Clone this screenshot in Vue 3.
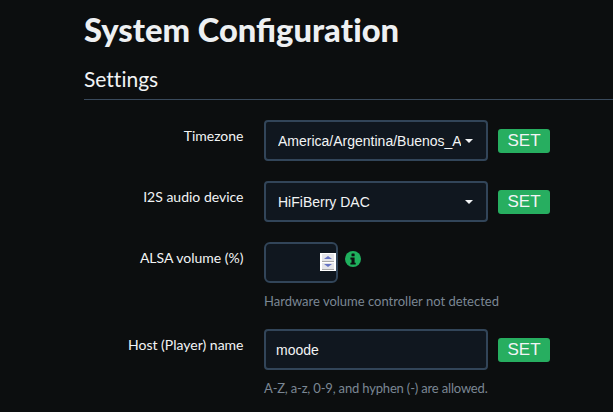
<template>
  <div class="page">
    <h1 class="title">System Configura<span class="nolig">ti</span>on</h1>
    <div class="legend">Settings</div>

    <div class="row">
      <label class="label">Timezone</label>
      <div class="controls">
        <div class="select">
          <span class="select-text">America/Argentina/Buenos_Aires</span>
          <span class="caret"></span>
        </div>
        <button class="btn">SET</button>
      </div>
    </div>

    <div class="row">
      <label class="label">I2S audio device</label>
      <div class="controls">
        <div class="select">
          <span class="select-text">HiFiBerry DAC</span>
          <span class="caret"></span>
        </div>
        <button class="btn">SET</button>
      </div>
    </div>

    <div class="row row-help">
      <label class="label">ALSA volume (%)</label>
      <div class="controls">
        <div class="number">
          <div class="spinner">
            <span class="spin"><i class="arrow up"></i></span>
            <span class="spin"><i class="arrow down"></i></span>
          </div>
        </div>
        <svg class="info" viewBox="0 0 16 16" width="16" height="16">
          <circle cx="8" cy="8" r="8" fill="#1fb05d" />
          <rect x="6.5" y="2.4" width="3.1" height="2.9" rx="0.5" fill="#0c0e0f" />
          <path d="M5.4 6.6h4.2v5.1h1.1v1.9H5.4v-1.9h1.1V8.5H5.4z" fill="#0c0e0f" />
        </svg>
      </div>
    </div>
    <div class="help">Hardware volume controller not detected</div>

    <div class="row row-help">
      <label class="label">Host (Player) name</label>
      <div class="controls">
        <div class="input">moode</div>
        <button class="btn">SET</button>
      </div>
    </div>
    <div class="help help-tight">A-Z, a-z, 0-9, and hyphen (-) are allowed.</div>
  </div>
</template>

<script setup>
</script>

<style>
html, body {
  background: #0c0e0f;
  overflow: hidden;
}
</style>

<style scoped>
.page {
  height: 412px;
  overflow: hidden;
  padding: 7px 0 0 84px;
  box-sizing: border-box;
  background: #0c0e0f;
  font-family: Lato, sans-serif;
  color: #eef0f2;
}

.title {
  margin: 0;
  font-size: 32.7px;
  line-height: 46px;
  font-weight: 900;
  color: #eef0f2;
}

.nolig {
  font-variant-ligatures: none;
}

.legend {
  margin-top: 6px;
  height: 40px;
  line-height: 40px;
  font-size: 21px;
  font-variant-ligatures: none;
  color: #f2f4f5;
  border-bottom: 1px solid #3a4a5c;
  margin-bottom: 20px;
}

.row {
  display: flex;
  margin-bottom: 20px;
}

.row-help {
  margin-bottom: 9px;
}

.label {
  width: 159.5px;
  text-align: right;
  font-size: 14px;
  line-height: 20px;
  padding-top: 6px;
  color: #f2f4f5;
}

.controls {
  display: flex;
  align-items: center;
  margin-left: 20.5px;
}

.select,
.input {
  width: 224px;
  height: 41px;
  box-sizing: border-box;
  border: 2px solid #324559;
  border-radius: 4px;
  background: #10171f;
  font-family: "Liberation Sans", Arial, sans-serif;
  font-size: 14px;
  color: #f2f4f5;
  display: flex;
  align-items: center;
}

.select {
  padding: 0 12px;
}

.input {
  padding: 0 10px;
}

.select-text {
  width: 183px;
  overflow: hidden;
  white-space: nowrap;
}

.caret {
  margin-left: 4px;
  border-left: 4px solid transparent;
  border-right: 4px solid transparent;
  border-top: 4px solid #f2f4f5;
}

.btn {
  margin: 1px 0 0 10px;
  width: 52px;
  height: 24px;
  padding: 0;
  border: none;
  border-radius: 3px;
  background: #27ae60;
  color: #f2f4f5;
  font-family: "Liberation Sans", Arial, sans-serif;
  font-size: 17px;
  line-height: 24px;
}

.number {
  width: 74px;
  height: 41px;
  box-sizing: border-box;
  border: 2px solid #324559;
  border-radius: 6px;
  background: #10171f;
  position: relative;
}

.spinner {
  position: absolute;
  right: 0;
  top: 9px;
  width: 16px;
  height: 18px;
  background: #fff;
  display: flex;
  flex-direction: column;
  gap: 1px;
  padding: 1px 2px;
  box-sizing: border-box;
}

.spin {
  flex: 1;
  background: #e4e5e8;
  border-bottom: 1px solid #a8a8a8;
  display: flex;
  align-items: center;
  justify-content: center;
}

.arrow {
  display: block;
  border-left: 4px solid transparent;
  border-right: 4px solid transparent;
}

.arrow.up {
  border-bottom: 3px solid #6674c4;
}

.arrow.down {
  border-top: 3px solid #6674c4;
}

.info {
  margin-left: 7px;
  margin-top: -7px;
}

.help {
  margin: 0 0 19px 180px;
  font-size: 13px;
  line-height: 18px;
  color: #7b8794;
}

.help-tight {
  letter-spacing: -0.17px;
}
</style>
